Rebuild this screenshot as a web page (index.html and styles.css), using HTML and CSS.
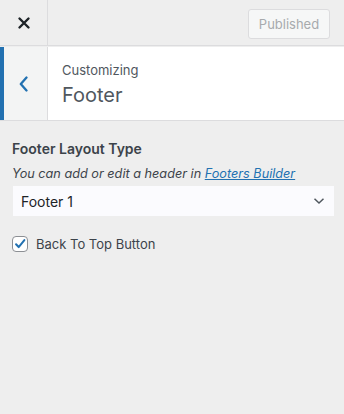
FILE: index.html
```html
<!DOCTYPE html>
<html lang="en">
  <head>
    <meta charset="UTF-8" />
    <meta name="viewport" content="width=device-width, initial-scale=1.0" />
    <title>Customizer - Footer</title>
    <link rel="stylesheet" href="styles.css">
  </head>
  <body>
    <div class="customizer">
      <div class="top-bar">
        <button class="close-btn" aria-label="Close">
          <svg width="14" height="14" viewBox="0 0 14 14"><path d="M2.5 2.5l9 9M11.5 2.5l-9 9" stroke="#1d2327" stroke-width="2.4" stroke-linecap="round"/></svg>
        </button>
        <div class="top-actions">
          <button class="publish-btn" disabled>Published</button>
        </div>
      </div>

      <div class="section-head">
        <button class="back-btn" aria-label="Back">
          <svg width="10" height="16" viewBox="0 0 10 16"><path d="M7.5 1.5L1.8 8l5.7 6.5" fill="none" stroke="#2271b1" stroke-width="2.3" stroke-linecap="round" stroke-linejoin="round"/></svg>
        </button>
        <div class="section-title">
          <span class="crumb">Customizing</span>
          <h3>Footer</h3>
        </div>
      </div>

      <div class="controls">
        <div class="control">
          <span class="control-title">Footer Layout Type</span>
          <span class="control-desc">You can add or edit a header in <a href="#">Footers Builder</a></span>
          <div class="select">
            <span>Footer 1</span>
            <svg width="12" height="8" viewBox="0 0 12 8"><path d="M1.5 1.8L6 6l4.5-4.2" fill="none" stroke="#50575e" stroke-width="1.5"/></svg>
          </div>
        </div>
        <label class="check">
          <span class="box">
            <svg width="16" height="16" viewBox="0 0 16 16"><path d="M3.5 8.3l3 3.2L13 3.5" fill="none" stroke="#2271b1" stroke-width="2.3" stroke-linecap="round" stroke-linejoin="round"/></svg>
          </span>
          Back To Top Button
        </label>
      </div>
    </div>
  </body>
</html>
```

FILE: styles.css
```css
* {
  box-sizing: border-box;
}
body {
  margin: 0;
  background-color: #eeeeee;
  font-family: "Inter", "Liberation Sans", sans-serif;
  color: #1d2327;
}
.customizer {
  width: 344px;
  height: 414px;
  background-color: #eeeeee;
}
.top-bar {
  display: flex;
  height: 46px;
  border-bottom: 1px solid #dcdcde;
}
.close-btn {
  width: 48px;
  height: 45px;
  border: 0;
  border-right: 1px solid #dcdcde;
  background: transparent;
  display: flex;
  align-items: center;
  justify-content: center;
  padding: 0;
}
.top-actions {
  flex: 1;
  display: flex;
  justify-content: flex-end;
  align-items: center;
  padding-right: 14px;
}
.publish-btn {
  height: 30px;
  width: 82px;
  margin-top: 2px;
  border: 1px solid #dcdcde;
  border-radius: 3px;
  background-color: #f6f7f7;
  color: #a7aaad;
  font-family: inherit;
  font-size: 13px;
  padding: 0;
}
.section-head {
  display: flex;
  height: 74px;
  margin-top: 1px;
  border-bottom: 1px solid #dcdcde;
  background-color: #fff;
}
.back-btn {
  width: 48px;
  border: 0;
  border-left: 4px solid #2271b1;
  border-right: 1px solid #dcdcde;
  background-color: #f3f4f4;
  display: flex;
  align-items: center;
  justify-content: center;
  padding: 0 4px 0 0;
}
.section-title {
  display: flex;
  flex-direction: column;
  padding: 15px 0 0 14px;
}
.crumb {
  font-size: 13px;
  color: #50575e;
  line-height: 16px;
}
.section-title h3 {
  margin: 4px 0 0;
  font-size: 20px;
  font-weight: 400;
  color: #50575e;
  line-height: 26px;
}
.controls {
  padding: 19px 10px 0 12px;
}
.control {
  display: flex;
  flex-direction: column;
}
.control-title {
  font-size: 14px;
  font-weight: 600;
  line-height: 18px;
  color: #3c434a;
}
.control-desc {
  margin-top: 7px;
  font-size: 12.7px;
  font-style: italic;
  line-height: 17px;
  color: #3c434a;
}
.control-desc a {
  color: #2271b1;
}
.select {
  margin: 4px 0 0 1px;
  height: 30px;
  background-color: #fbfbfe;
  display: flex;
  align-items: center;
  justify-content: space-between;
  padding: 0 9px 0 8px;
  font-size: 14px;
  color: #1d2327;
}
.check {
  display: flex;
  align-items: center;
  gap: 8px;
  margin: 20px 0 0 0;
  font-size: 13px;
  color: #3c434a;
}
.box {
  width: 16px;
  height: 16px;
  border: 1px solid #8c8f94;
  border-radius: 4px;
  background-color: #fff;
  display: flex;
  align-items: center;
  justify-content: center;
}
```
